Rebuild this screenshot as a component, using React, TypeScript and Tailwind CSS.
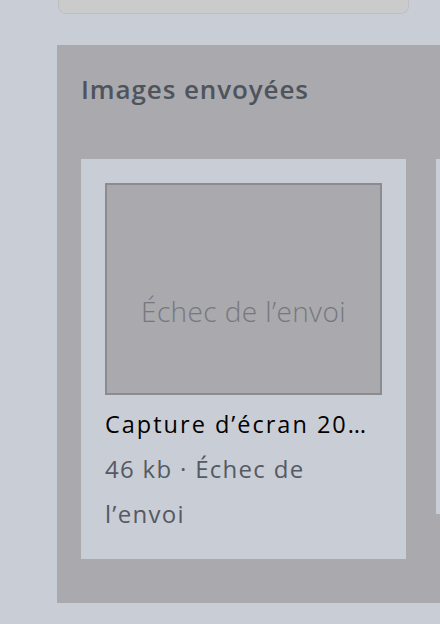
import React from "react";

export default function App() {
  const font = { fontFamily: '"Open Sans", "Noto Sans", sans-serif' };
  return (
    <div className="w-[440px] h-[624px] bg-[#c9cdd6] overflow-hidden" style={font}>
      <div className="ml-[58px] w-[351px] h-[14px] bg-[#cbcbcb] border border-t-0 border-[#bcc0c6] rounded-b-[8px]" />
      <div className="ml-[57px] mt-[31px] w-[420px] bg-[#a9a9ae] pt-[26px] pb-[44px]">
        <h2 className="pl-[24px] text-[26px] leading-[36px] font-semibold text-[#4f545c] tracking-[0.9px]">
          Images envoyées
        </h2>
        <div className="mt-[52px] pl-[24px] flex items-start gap-[30px]">
          <div className="w-[325px] shrink-0 bg-[#c9cdd6] pt-[24px] px-[24px] pb-[23px]">
            <div className="h-[212px] border-2 border-[#8b8c91] bg-[#a9a9ae] flex items-center justify-center">
              <span className="text-[28px] font-light text-[#77787d] mt-[44px] tracking-[0.4px]">Échec de l’envoi</span>
            </div>
            <div className="mt-[13px] text-[23.5px] leading-[32px] text-black whitespace-nowrap overflow-hidden tracking-[2px]">
              Capture d’écran 20…
            </div>
            <div className="mt-[6px] w-[240px] text-[24px] leading-[45px] text-[#555a63] tracking-[1.3px]">
              46 kb · Échec de l’envoi
            </div>
          </div>
          <div className="w-[325px] h-[355px] shrink-0 bg-[#c9cdd6]" />
        </div>
      </div>
    </div>
  );
}
